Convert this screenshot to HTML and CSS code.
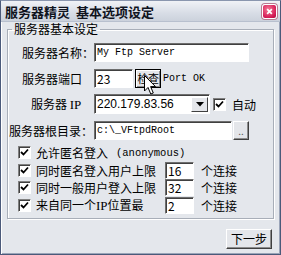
FILE: index.html
```html
<!DOCTYPE html>
<html>
<head>
<meta charset="utf-8">
<link rel="stylesheet" href="styles.css">
</head>
<body>
<div class="window">
  <div class="titlebar">
    <span class="title">服务器精灵&nbsp;&nbsp;基本选项设定</span>
    <span class="close">
      <svg width="14" height="14" viewBox="0 0 14 14"><path d="M4 4 L10 10 M10 4 L4 10" stroke="#fff" stroke-width="2.2"/></svg>
    </span>
  </div>
  <div class="client">
    <fieldset class="group">
      <legend>服务器基本设定</legend>
      <div class="row">
        <span class="label l-name">服务器名称：</span>
        <span class="edit w-name mono">My Ftp Server</span>
      </div>
      <div class="row">
        <span class="label l-port">服务器端口</span>
        <span class="edit w-port">23</span>
        <span class="btn btn-check">检查<svg class="cursor" width="13" height="21" viewBox="0 0 13 21"><path d="M0.5 0.5 L0.5 16 L4 12.5 L6.8 19 L9.3 18 L6.6 11.6 L11.5 11.6 Z" fill="#fff" stroke="#000" stroke-width="1"/></svg></span>
        <span class="mono ok">Port OK</span>
      </div>
      <div class="row">
        <span class="label l-ip">服务器&nbsp;<span class="ip">IP</span></span>
        <span class="combo"><span class="combo-text">220.179.83.56</span><span class="drop"><svg width="8" height="5" viewBox="0 0 8 5"><path d="M0 0 H8 L4 4.5 Z" fill="#000"/></svg></span></span>
        <span class="chk"><svg width="9" height="9" viewBox="0 0 9 9"><path d="M1 4 L3.5 6.5 L8 1.5" fill="none" stroke="#000" stroke-width="1.8"/></svg></span>
        <span class="auto">自动</span>
      </div>
      <div class="row">
        <span class="label l-root">服务器根目录：</span>
        <span class="edit w-root mono">c:\_VFtpdRoot</span>
        <span class="btn btn-dots">..</span>
      </div>
      <div class="checks">
        <div class="crow">
          <span class="chk"><svg width="9" height="9" viewBox="0 0 9 9"><path d="M1 4 L3.5 6.5 L8 1.5" fill="none" stroke="#000" stroke-width="1.8"/></svg></span>
          <span>允许匿名登入</span><span class="mono anon">(anonymous)</span>
        </div>
        <div class="crow">
          <span class="chk"><svg width="9" height="9" viewBox="0 0 9 9"><path d="M1 4 L3.5 6.5 L8 1.5" fill="none" stroke="#000" stroke-width="1.8"/></svg></span>
          <span class="ctext">同时匿名登入用户上限</span>
          <span class="edit small">16</span>
          <span class="unit">个连接</span>
        </div>
        <div class="crow">
          <span class="chk"><svg width="9" height="9" viewBox="0 0 9 9"><path d="M1 4 L3.5 6.5 L8 1.5" fill="none" stroke="#000" stroke-width="1.8"/></svg></span>
          <span class="ctext">同时一般用户登入上限</span>
          <span class="edit small">32</span>
          <span class="unit">个连接</span>
        </div>
        <div class="crow">
          <span class="chk"><svg width="9" height="9" viewBox="0 0 9 9"><path d="M1 4 L3.5 6.5 L8 1.5" fill="none" stroke="#000" stroke-width="1.8"/></svg></span>
          <span class="ctext">来自同一个<span class="ip">IP</span>位置最</span>
          <span class="edit small">2</span>
          <span class="unit">个连接</span>
        </div>
      </div>
    </fieldset>
    <div class="footer">
      <span class="btn btn-next">下一步</span>
    </div>
  </div>
</div>
</body>
</html>
```

FILE: styles.css
```css
* { box-sizing: border-box; }
html, body { margin: 0; padding: 0; background: #e6e8ec; }
body {
  font-family: "Noto Sans CJK SC", "Noto Sans", sans-serif;
  font-size: 12px;
  color: #000;
}
.window {
  width: 281px;
  height: 255px;
  border: 1px solid #4b5a7a;
  border-top-color: #8a96ae;
  background: #e4e7ec;
  display: flex;
  flex-direction: column;
  box-shadow: inset 1px 0 0 #fff, inset -1px 0 0 #9aa4b8, inset 0 -1px 0 #9aa4b8;
}
.titlebar {
  height: 21px;
  flex: none;
  display: flex;
  align-items: center;
  justify-content: space-between;
  padding: 0 3px 0 4px;
  background: linear-gradient(#f0f2f6, #d8dde6 60%, #ccd2dc);
  border-bottom: 1px solid #b8c0ce;
}
.title {
  font-weight: bold;
  font-size: 13px;
  color: #10141e;
  line-height: 1;
}
.close {
  width: 15px;
  height: 15px;
  border-radius: 3px;
  background: radial-gradient(circle at 40% 35%, #f47a96, #d41a55 70%, #a80c3c);
  border: 1px solid #fff;
  box-shadow: 0 0 0 1px #b87a90;
  display: flex;
  align-items: center;
  justify-content: center;
}
.close svg { width: 11px; height: 11px; }
.client {
  flex: 1;
  display: flex;
  flex-direction: column;
  padding: 0 6px 0 6px;
}
.group {
  margin: 0;
  padding: 3px 0 0 0;
  border: 1px solid #a8aeb8;
  box-shadow: inset 1px 1px 0 #fff, 1px 1px 0 #fff;
  height: 197px;
}
legend {
  margin-left: 4px;
  padding: 0 2px;
  font-size: 12px;
  line-height: 14px;
}
.row {
  display: flex;
  align-items: center;
  height: 26px;
}
.label {
  width: 85px;
  flex: none;
  margin-right: 1px;
  white-space: nowrap;
  font-size: 12px;
}
.l-name, .l-port { padding-left: 14px; }
.l-ip { padding-left: 23px; }
.l-root { padding-left: 1px; }
.ip { font-family: "Liberation Serif", serif; font-size: 13px; }
.mono { font-family: "Liberation Mono", monospace; font-size: 10px; }
.edit {
  height: 19px;
  background: #fff;
  border: 1px solid;
  border-color: #6e6e6e #fff #fff #6e6e6e;
  box-shadow: inset 1px 1px 0 #404040;
  padding: 1px 0 0 2px;
  line-height: 16px;
  font-size: 12px;
  white-space: nowrap;
  overflow: hidden;
  flex: none;
}
.edit.mono { font-size: 10px; }
.w-name { width: 155px; }
.w-port { width: 39px; }
.w-root { width: 138px; }
.btn {
  display: inline-flex;
  align-items: center;
  justify-content: center;
  background: #e4e6ea;
  border: 1px solid;
  border-color: #fff #404040 #404040 #fff;
  box-shadow: inset -1px -1px 0 #8c8c8c;
  flex: none;
  position: relative;
  line-height: 1;
  white-space: nowrap;
}
.btn-check {
  width: 26px;
  height: 19px;
  margin-left: 2px;
  font-size: 11px;
  letter-spacing: -0.5px;
  border-color: #000;
  box-shadow: inset 1px 1px 0 #fff, inset -1px -1px 0 #8c8c8c;
}
.cursor {
  position: absolute;
  left: 8px;
  top: 5px;
}
.ok { margin-left: 2px; }
.combo {
  display: flex;
  width: 116px;
  height: 20px;
  background: #fff;
  border: 1px solid;
  border-color: #6e6e6e #fff #fff #6e6e6e;
  box-shadow: inset 1px 1px 0 #404040;
  flex: none;
}
.combo-text {
  flex: 1;
  padding: 2px 0 0 2px;
  line-height: 15px;
  font-family: "Liberation Sans", sans-serif;
  font-size: 12px;
  white-space: nowrap;
  overflow: hidden;
}
.drop {
  width: 17px;
  flex: none;
  margin: 2px 1px 1px 0;
  background: #e4e6ea;
  border: 1px solid;
  border-color: #fff #404040 #404040 #fff;
  display: flex;
  align-items: center;
  justify-content: center;
}
.chk {
  width: 13px;
  height: 13px;
  flex: none;
  background: #fff;
  border: 1px solid;
  border-color: #808080 #fff #fff #808080;
  box-shadow: inset 1px 1px 0 #404040;
  display: inline-flex;
  align-items: center;
  justify-content: center;
}
.row .chk { margin-left: 3px; }
.auto { margin-left: 6px; font-size: 12px; white-space: nowrap; }
.btn-dots {
  width: 16px;
  height: 19px;
  margin-left: 1px;
  font-size: 10px;
  color: #555;
  padding-bottom: 3px;
  align-items: flex-end;
}
.checks {
  margin-top: 1px;
  padding-left: 10px;
  display: flex;
  flex-direction: column;
}
.crow {
  display: flex;
  align-items: center;
  height: 17.5px;
  white-space: nowrap;
}
.crow .chk { margin-right: 5px; }
.anon { margin-left: 8px; font-size: 10.5px; }
.ctext { width: 129px; white-space: nowrap; flex: none; overflow: hidden; }
.edit.small { width: 29px; height: 17px; line-height: 14px; }
.unit { margin-left: 7px; }
.footer {
  display: flex;
  justify-content: flex-end;
  padding-top: 10px;
  padding-right: 2px;
}
.btn-next {
  width: 46px;
  height: 20px;
  font-size: 12px;
}
```
